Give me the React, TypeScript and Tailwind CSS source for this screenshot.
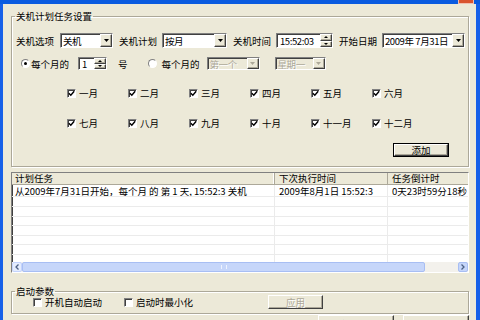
import React from "react";

const sunken =
  "border border-[#808080] border-b-white border-r-white shadow-[inset_1px_1px_0_#404040]";
const raised =
  "bg-[#ECE9D8] border border-white border-b-[#404040] border-r-[#404040] shadow-[inset_-1px_-1px_0_#ACA899]";

const Tri = ({ up, gray, w = 5, h = 3 }: { up?: boolean; gray?: boolean; w?: number; h?: number }) => (
  <svg width={w} height={h} viewBox={`0 0 ${w} ${h}`}>
    <polygon
      points={up ? `0,${h} ${w},${h} ${w / 2},0` : `0,0 ${w},0 ${w / 2},${h}`}
      fill={gray ? "#ACA899" : "#000"}
    />
  </svg>
);

const Combo = ({
  text,
  className,
  disabled,
}: {
  text: string;
  className: string;
  disabled?: boolean;
}) => (
  <div
    className={`flex h-full ${sunken} ${disabled ? "bg-[#ECE9D8]" : "bg-white"} ${className}`}
  >
    <div
      className={`flex-1 pl-[2px] flex items-center whitespace-nowrap overflow-hidden tracking-[-0.4px] ${
        disabled ? "text-[#ACA899] [text-shadow:1px_1px_0_white]" : ""
      }`}
    >
      {text}
    </div>
    <div className={`w-[12px] h-full flex items-center justify-center ${raised}`}>
      <Tri gray={disabled} />
    </div>
  </div>
);

const Spin = ({ text, className }: { text: string; className: string }) => (
  <div className={`flex h-full bg-white ${sunken} ${className}`}>
    <div className="flex-1 pl-[3px] flex items-center whitespace-nowrap tracking-[-0.4px]">{text}</div>
    <div className="w-[12px] h-full flex flex-col">
      <div className={`flex-1 flex items-center justify-center ${raised}`}>
        <Tri up w={4} h={2} />
      </div>
      <div className={`flex-1 flex items-center justify-center ${raised}`}>
        <Tri w={4} h={2} />
      </div>
    </div>
  </div>
);

const Check = ({ checked }: { checked?: boolean }) => (
  <div className={`w-[9px] h-[9px] shrink-0 bg-white flex items-center justify-center ${sunken}`}>
    {checked && (
      <svg width="7" height="7" viewBox="0 0 7 7">
        <path d="M0.8 3.2 L2.8 5.2 L6.2 1.2" stroke="#000" strokeWidth="1.4" fill="none" />
      </svg>
    )}
  </div>
);

const Radio = ({ checked }: { checked?: boolean }) => (
  <div className="w-[9px] h-[9px] shrink-0 rounded-full bg-white border border-[#808080] border-b-white border-r-white flex items-center justify-center">
    {checked && <div className="w-[3px] h-[3px] rounded-full bg-black" />}
  </div>
);

const months = [
  ["一月", "二月", "三月", "四月", "五月", "六月"],
  ["七月", "八月", "九月", "十月", "十一月", "十二月"],
];

const rowHeights = [12, 10, 10, 9, 10, 9, 10, 10];

export default function App() {
  return (
    <div className="w-[480px] h-[320px] overflow-hidden bg-[#1660E8] flex flex-col font-['Noto_Sans_CJK_SC','Noto_Sans',sans-serif] text-[9.5px] text-black leading-[12px]">
      {/* title bar bottom */}
      <div className="h-[4px] shrink-0 relative bg-[#0A5BE0]">
        <div className="absolute right-[6px] top-0 w-[16px] h-[4px] bg-[#D9542F] border-x border-b border-[#F0C0B0]" />
      </div>
      <div className="flex flex-1 min-h-0">
        <div className="w-[3px] bg-[#1660E8]" />
        <div className="flex-1 bg-[#ECE9D8] pl-[8px] pr-[7px] flex flex-col overflow-hidden">
          {/* group 1 */}
          <fieldset className="mt-[6px] h-[157px] shrink-0 border border-[#ACA899] shadow-[inset_1px_1px_0_white,1px_1px_0_white] flex flex-col">
            <legend className="ml-[3px] px-[1px] leading-[12px]">关机计划任务设置</legend>
            <div className="flex flex-col pl-[4px]">
              <div className="mt-[11px] h-[15px] flex items-center">
                <span className="w-[38px] whitespace-nowrap">关机选项</span>
                <Combo text="关机" className="ml-[6px] w-[53px]" />
                <span className="ml-[6px] w-[38px] whitespace-nowrap">关机计划</span>
                <Combo text="按月" className="ml-[5px] w-[65px]" />
                <span className="ml-[6px] w-[38px] whitespace-nowrap">关机时间</span>
                <Spin text="15:52:03" className="ml-[5px] w-[57px]" />
                <span className="ml-[6px] w-[38px] whitespace-nowrap">开始日期</span>
                <Combo text="2009年 7月31日" className="ml-[5px] w-[83px]" />
              </div>
              <div className="mt-[9px] h-[13px] flex items-center">
                <div className="ml-[5px]">
                  <Radio checked />
                </div>
                <span className="ml-[1px] w-[38px] whitespace-nowrap">每个月的</span>
                <Spin text="1" className="ml-[9px] w-[29px]" />
                <span className="ml-[11px]">号</span>
                <div className="ml-[20px]">
                  <Radio />
                </div>
                <span className="ml-[5px] w-[38px] whitespace-nowrap">每个月的</span>
                <Combo text="第一个" disabled className="ml-[7px] w-[53px]" />
                <Combo text="星期一" disabled className="ml-[15px] w-[51px]" />
              </div>
              {months.map((row, i) => (
                <div
                  key={i}
                  className={`${i === 0 ? "mt-[17px]" : "mt-[18px]"} h-[12px] ml-[51px] grid grid-cols-[repeat(6,61px)]`}
                >
                  {row.map((m) => (
                    <div key={m} className="flex items-center">
                      <Check checked />
                      <span className="ml-[3px] whitespace-nowrap">{m}</span>
                    </div>
                  ))}
                </div>
              ))}
              <div className="mt-[14px] h-[14px] self-end mr-[19px] w-[56px] border border-black">
                <div className={`w-full h-full flex items-center justify-center ${raised}`}>添加</div>
              </div>
            </div>
          </fieldset>

          {/* list view */}
          <div className={`mt-[5px] h-[101px] shrink-0 bg-white flex flex-col overflow-hidden ${sunken}`}>
            <div className="h-[12px] shrink-0 flex bg-[#ECE9D8] border-b border-[#ACA899] leading-[11px]">
              <div className="w-[263px] pl-[3px] border-r border-[#ACA899] shadow-[inset_-1px_0_0_white]">计划任务</div>
              <div className="w-[113px] pl-[4px] border-r border-[#ACA899]">下次执行时间</div>
              <div className="flex-1 pl-[4px]">任务倒计时</div>
            </div>
            <div className="flex-1 min-h-0 overflow-hidden flex flex-col">
              {rowHeights.map((h, i) => (
                <div
                  key={i}
                  className="flex shrink-0 border-b border-[#EBEBEB] whitespace-nowrap leading-[10px]"
                  style={{ height: h }}
                >
                  <div className="w-[263px] pl-[3px] flex items-center overflow-hidden border-r border-[#EBEBEB]">
                    {i === 0 ? "从2009年7月31日开始，每个月 的 第 1 天, 15:52:3 关机" : ""}
                  </div>
                  <div className="w-[113px] pl-[4px] flex items-center border-r border-[#EBEBEB]">
                    {i === 0 ? "2009年8月1日 15:52:3" : ""}
                  </div>
                  <div className="flex-1 pl-[4px] flex items-center">{i === 0 ? "0天23时59分18秒" : ""}</div>
                </div>
              ))}
            </div>
            {/* horizontal scrollbar */}
            <div className="h-[10px] shrink-0 flex bg-[#F3F1EC]">
              <div className="w-[10px] h-full rounded-[2px] bg-[#E4ECFD] border border-[#C3D3FD] flex items-center justify-center">
                <svg width="4" height="6" viewBox="0 0 4 6">
                  <path d="M3.5 0.5 L1 3 L3.5 5.5" stroke="#4D6185" strokeWidth="1.3" fill="none" />
                </svg>
              </div>
              <div className="w-[403px] h-full rounded-[2px] bg-[#C6D6FA] border border-[#A8BEF3] flex items-center justify-center">
                <div className="w-[6px] h-[4px] border-x border-[#EEF3FE]" />
              </div>
              <div className="flex-1" />
              <div className="w-[10px] h-full rounded-[2px] bg-[#C6D6FA] border border-[#A8BEF3] flex items-center justify-center">
                <svg width="4" height="6" viewBox="0 0 4 6">
                  <path d="M0.5 0.5 L3 3 L0.5 5.5" stroke="#4D6185" strokeWidth="1.3" fill="none" />
                </svg>
              </div>
            </div>
          </div>

          {/* group 2 */}
          <fieldset className="mt-[12px] h-[29px] shrink-0 border border-[#ACA899] shadow-[inset_1px_1px_0_white,1px_1px_0_white] flex flex-col">
            <legend className="ml-[3px] px-[1px] leading-[12px]">启动参数</legend>
            <div className="-mt-[2px] h-[14px] flex items-center">
              <div className="ml-[21px]">
                <Check />
              </div>
              <span className="ml-[3px] whitespace-nowrap">开机自动启动</span>
              <div className="ml-[22px]">
                <Check />
              </div>
              <span className="ml-[3px] whitespace-nowrap">启动时最小化</span>
              <div
                className={`ml-[75px] w-[55px] h-full flex items-center justify-center text-[#ACA899] [text-shadow:1px_1px_0_white] ${raised}`}
              >
                应用
              </div>
            </div>
          </fieldset>

          {/* bottom buttons (cut off at the window edge, as in the screenshot) */}
          <div className="mt-[1px] h-[16px] shrink-0 flex justify-end gap-[9px]">
            <div className={`w-[76px] h-full flex items-start justify-center pt-[2px] ${raised}`}>删除选中计划</div>
            <div className={`w-[66px] h-full flex items-start justify-center pt-[2px] ${raised}`}>退出</div>
          </div>
        </div>
        <div className="w-[4px] bg-[#1660E8]" />
      </div>
    </div>
  );
}
